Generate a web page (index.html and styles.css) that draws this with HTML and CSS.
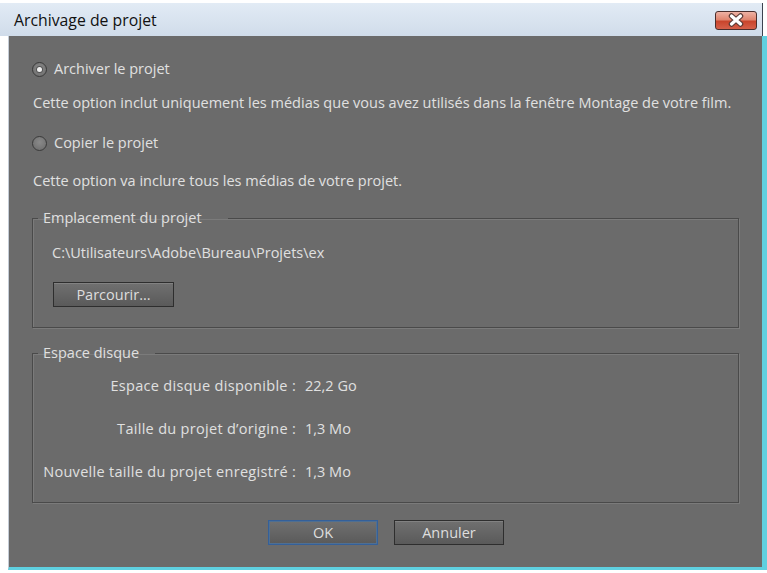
FILE: index.html
```html
<!DOCTYPE html>
<html lang="fr">
<head>
<meta charset="utf-8">
<title>Archivage de projet</title>
<link rel="stylesheet" href="styles.css">
</head>
<body>
<div class="window">
  <div class="titlebar">
    <span class="title">Archivage de projet</span>
    <div class="close">
      <svg width="22" height="14" viewBox="0 0 22 14">
        <path d="M6.5 3 L15.5 11 M15.5 3 L6.5 11" stroke="#5a3a36" stroke-width="5.5" stroke-linecap="round"/>
        <path d="M6.5 3 L15.5 11 M15.5 3 L6.5 11" stroke="#ffffff" stroke-width="3.2" stroke-linecap="round"/>
      </svg>
    </div>
  </div>
  <div class="content">
    <label class="radio-row r1"><span class="radio checked"></span><span>Archiver le projet</span></label>
    <p class="desc d1">Cette option inclut uniquement les médias que vous avez utilisés dans la fenêtre Montage de votre film.</p>
    <label class="radio-row r2"><span class="radio"></span><span>Copier le projet</span></label>
    <p class="desc d2">Cette option va inclure tous les médias de votre projet.</p>

    <fieldset class="group g1">
      <legend>Emplacement du projet</legend>
      <div class="path">C:\Utilisateurs\Adobe\Bureau\Projets\ex</div>
      <button class="btn browse">Parcourir...</button>
    </fieldset>

    <fieldset class="group g2">
      <legend>Espace disque</legend>
      <div class="stats">
        <span class="lbl">Espace disque disponible :</span><span class="val">22,2 Go</span>
        <span class="lbl">Taille du projet d’origine :</span><span class="val">1,3 Mo</span>
        <span class="lbl">Nouvelle taille du projet enregistré :</span><span class="val">1,3 Mo</span>
      </div>
    </fieldset>

    <div class="actions">
      <button class="btn ok">OK</button>
      <button class="btn">Annuler</button>
    </div>
  </div>
</div>
</body>
</html>
```

FILE: styles.css
```css
* { box-sizing: border-box; }
html, body { margin: 0; padding: 0; background: #ffffff; }
body { width: 767px; height: 573px; overflow: hidden; font-family: "Open Sans", "Noto Sans", sans-serif; }

.window { margin-top: 3px; width: 767px; }

.titlebar {
  width: 763px;
  height: 33px;
  background: linear-gradient(#e2ebf5, #d0dcea);
  border-right: 1px solid #3c4450;
  display: flex;
  align-items: center;
  justify-content: space-between;
  padding-left: 14px;
  padding-right: 5px;
}
.title { font-size: 15.8px; color: #111; }
.close {
  width: 42px;
  height: 19px;
  margin-top: 1px;
  border: 1px solid #4b2e2c;
  border-radius: 3px;
  background: linear-gradient(#eeb2a4 0%, #e08670 45%, #c9452c 55%, #d6604a 100%);
  display: flex;
  align-items: center;
  justify-content: center;
}

.content {
  margin-left: 8px;
  width: 759px;
  height: 534px;
  background: #6b6b6b;
  border-left: 1px solid #c4ccd6;
  border-right: 5px solid #5fd0e0;
  border-bottom: 3px solid #5fd0e0;
  box-shadow: 1px 0 0 #1c3040;
  padding-top: 23px;
  color: #e0e0e0;
  font-size: 14.5px;
  line-height: 20px;
}

.radio-row {
  display: flex;
  align-items: center;
  gap: 7px;
  margin-left: 23px;
  height: 20px;
}
.r2 { margin-top: 20px; }
.radio {
  width: 15px;
  height: 15px;
  border-radius: 50%;
  border: 1px solid #3a3a3a;
  background: radial-gradient(circle at 50% 40%, #8a8a8a, #6a6a6a);
  display: flex;
  align-items: center;
  justify-content: center;
}
.radio.checked::after {
  content: "";
  width: 5px;
  height: 5px;
  border-radius: 50%;
  background: #f0f0f0;
  box-shadow: 0 0 0 1px #555;
}

.desc { margin: 14px 0 0 24px; white-space: nowrap; }
.d2 { margin-top: 18px; }

.group {
  margin: 17px 0 0 23px;
  width: 707px;
  border: 1px solid #4a4a4a;
  box-shadow: inset 1px 1px 0 #7b7b7b, 1px 1px 0 #7b7b7b;
  padding: 15px 0 20px 0;
  min-width: 0;
}
.group legend {
  padding: 0 26px 0 5px;
  margin-left: 5px;
  line-height: 20px;
}
.g2 legend { padding-right: 16px; }
.g2 { margin-top: 15px; padding: 13px 0 20px 0; }

.path { height: 20px; margin-left: 19px; white-space: nowrap; }
.browse { margin: 19px 0 0 20px; width: 121px; }

.btn {
  display: block;
  height: 25px;
  border: 1px solid #2e2e2e;
  background: linear-gradient(#707070, #5a5a5a);
  box-shadow: inset 0 1px 0 #828282;
  color: #dedede;
  font-family: "Open Sans", "Noto Sans", sans-serif;
  font-size: 14.5px;
  line-height: 20px;
  padding: 0;
}

.stats {
  display: grid;
  grid-template-columns: 263px auto;
  column-gap: 9px;
  row-gap: 23px;
  white-space: nowrap;
}
.lbl { text-align: right; letter-spacing: 0.3px; }

.actions {
  display: flex;
  justify-content: center;
  gap: 16px;
  margin-top: 17px;
  padding-left: 1px;
}
.actions .btn { width: 110px; }
.actions .ok { border-color: #34609a; box-shadow: inset 0 0 0 1px #4f6f92; }
```
